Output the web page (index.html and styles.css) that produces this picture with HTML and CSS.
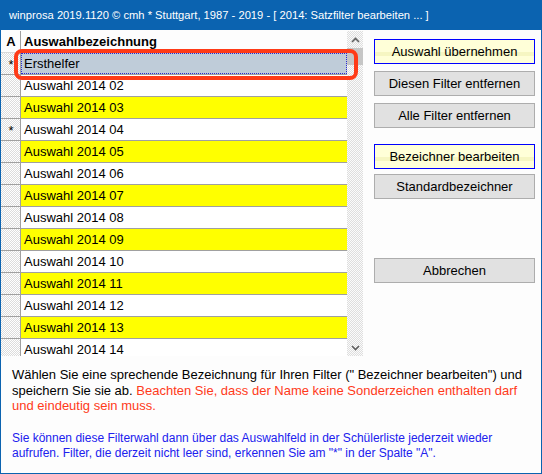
FILE: index.html
```
<!DOCTYPE html>
<html lang="de">
<head>
<meta charset="utf-8">
<title>winprosa</title>
<link rel="stylesheet" href="styles.css">
</head>
<body>
<div class="window">
  <div class="titlebar">winprosa 2019.1120 © cmh * Stuttgart, 1987 - 2019 - [ 2014: Satzfilter bearbeiten ... ]</div>
  <div class="main">
    <div class="gridpanel">
      <div class="grid">
        <div class="row head"><div class="ca">A</div><div class="cn">Auswahlbezeichnung</div></div>
        <div class="row sel"><div class="ca">*</div><div class="cn"><span class="focus">Ersthelfer</span></div></div>
        <div class="row"><div class="ca"></div><div class="cn">Auswahl 2014 02</div></div>
        <div class="row y"><div class="ca"></div><div class="cn">Auswahl 2014 03</div></div>
        <div class="row"><div class="ca">*</div><div class="cn">Auswahl 2014 04</div></div>
        <div class="row y"><div class="ca"></div><div class="cn">Auswahl 2014 05</div></div>
        <div class="row"><div class="ca"></div><div class="cn">Auswahl 2014 06</div></div>
        <div class="row y"><div class="ca"></div><div class="cn">Auswahl 2014 07</div></div>
        <div class="row"><div class="ca"></div><div class="cn">Auswahl 2014 08</div></div>
        <div class="row y"><div class="ca"></div><div class="cn">Auswahl 2014 09</div></div>
        <div class="row"><div class="ca"></div><div class="cn">Auswahl 2014 10</div></div>
        <div class="row y"><div class="ca"></div><div class="cn">Auswahl 2014 11</div></div>
        <div class="row"><div class="ca"></div><div class="cn">Auswahl 2014 12</div></div>
        <div class="row y"><div class="ca"></div><div class="cn">Auswahl 2014 13</div></div>
        <div class="row"><div class="ca"></div><div class="cn">Auswahl 2014 14</div></div>
      </div>
      <div class="scrollbar">
        <svg class="arrow" width="9" height="6" viewBox="0 0 9 6"><path d="M1 5 L4.5 1.5 L8 5" fill="none" stroke="#606060" stroke-width="1.6"/></svg>
        <div class="thumb"></div>
        <div class="track"></div>
        <svg class="arrow" width="9" height="6" viewBox="0 0 9 6"><path d="M1 1 L4.5 4.5 L8 1" fill="none" stroke="#606060" stroke-width="1.6"/></svg>
      </div>
      <div class="mark"></div>
    </div>
    <div class="buttons">
      <button class="btn primary">Auswahl übernehmen</button>
      <button class="btn">Diesen Filter entfernen</button>
      <button class="btn">Alle Filter entfernen</button>
      <button class="btn primary gap1">Bezeichner bearbeiten</button>
      <button class="btn">Standardbezeichner</button>
      <button class="btn gap2">Abbrechen</button>
    </div>
  </div>
  <div class="info">
    <p class="p1">Wählen Sie eine sprechende Bezeichnung für Ihren Filter (" Bezeichner bearbeiten") und<br>speichern Sie sie ab. <span class="red">Beachten Sie, dass der Name keine Sonderzeichen enthalten darf<br>und eindeutig sein muss.</span></p>
    <p class="p2">Sie können diese Filterwahl dann über das Auswahlfeld in der Schülerliste jederzeit wieder<br>aufrufen. Filter, die derzeit nicht leer sind, erkennen Sie am "*" in der Spalte "A".</p>
  </div>
</div>
</body>
</html>
```
FILE: styles.css
```
* { box-sizing: border-box; }
html, body { margin: 0; padding: 0; }
body { background: #fff; font-family: "Liberation Sans", Arial, sans-serif; }

.window {
  width: 542px;
  height: 474px;
  border: 1px solid #0b63b0;
  border-top: none;
  background: #fdfdfd;
  display: flex;
  flex-direction: column;
}
.titlebar {
  height: 30px;
  margin: 0 -1px;
  background: #0b63b0;
  color: #fff;
  font-size: 11.2px;
  line-height: 30px;
  padding-left: 9px;
  white-space: nowrap;
}
.main {
  display: flex;
  padding-top: 1px;
  height: 326px;
}
.gridpanel {
  position: relative;
  display: flex;
  width: 362px;
  height: 325px;
  overflow: visible;
}
.grid {
  width: 346px;
  height: 325px;
  overflow: hidden;
  background: #fff;
}
.row {
  display: flex;
  height: 22px;
  font-size: 13px;
}
.ca {
  width: 20px;
  border-right: 1px solid #a0a0a0;
  border-bottom: 1px solid #a0a0a0;
  background: repeating-conic-gradient(#dcdcdc 0 25%, #fff 0 50%) 0 0 / 2px 2px;
  text-align: center;
  line-height: 24px;
  padding-left: 1px;
}
.cn {
  flex: 1;
  border-bottom: 1px solid #a0a0a0;
  line-height: 21px;
  padding-left: 3px;
  color: #000;
}
.head .ca, .head .cn {
  font-weight: bold;
  background: #fdfdfd;
  border-bottom-color: #d8d8d8;
  line-height: 22px;
}
.head .ca { border-right-color: #a0a0a0; }
.y .cn { background: #ffff00; }
.sel .cn { background: #bfccd9; padding: 0; }
.focus {
  display: block;
  height: 21px;
  border: 1px dotted #2a2ad0;
  padding-left: 2px;
  line-height: 20px;
}
.scrollbar {
  width: 16px;
  height: 325px;
  display: flex;
  flex-direction: column;
  align-items: center;
  background: repeating-conic-gradient(#dedede 0 25%, #fbfbfb 0 50%) 0 0 / 2px 2px;
}
.arrow { margin: 6px 0 5px; }
.thumb { width: 16px; height: 17px; background: #c6c6c6; }
.track { flex: 1; }
.mark {
  position: absolute;
  left: 13px;
  top: 18px;
  width: 344px;
  height: 31px;
  border: 4px solid #ff3b17;
  border-radius: 8px;
  pointer-events: none;
}
.buttons {
  display: flex;
  flex-direction: column;
  padding-left: 11px;
  padding-top: 8px;
}
.btn {
  width: 161px;
  height: 25px;
  margin-bottom: 7px;
  font-family: "Liberation Sans", Arial, sans-serif;
  font-size: 13px;
  color: #000;
  background: #e1e1e1;
  border: 1px solid #adadad;
  padding: 0;
}
.btn.primary {
  border-color: #0000ff;
  background: linear-gradient(#ffffd8 0, #ffffd8 50%, #f6f6c2 50%, #f6f6c2 70%, #ffffd8 70%);
}
.gap1 { margin-top: 9px; margin-bottom: 5px; }
.gap2 { margin-top: 52px; }
.info {
  padding: 11px 0 0 11px;
}
.info p { margin: 0; }
.p1 {
  font-size: 13px;
  line-height: 15.5px;
  color: #000;
}
.red { color: #ff3a1a; }
.p2 {
  margin-top: 17px !important;
  font-size: 12px;
  line-height: 15px;
  color: #2020ee;
}
```
